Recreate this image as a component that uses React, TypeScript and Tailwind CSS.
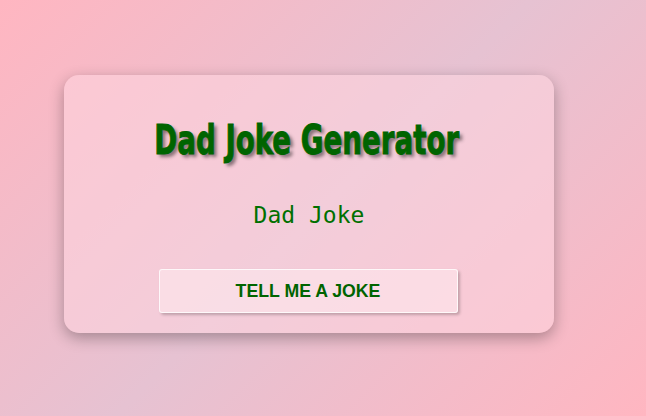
import React from "react";

export default function App() {
  return (
    <div className="w-[646px] h-[416px] overflow-hidden bg-[linear-gradient(135deg,#ffb6c1_0%,#e6c2d2_50%,#ffb6c1_100%)] pl-[64px] pt-[75px]">
      <div className="w-[490px] h-[258px] rounded-[15px] bg-[rgba(255,215,225,0.5)] shadow-[0_5px_15px_rgba(0,0,0,0.3)] flex flex-col items-center pt-[41px]">
        <h1 className="h-[46px] leading-[46px] text-[40px] font-bold text-[#006400] font-['DejaVu_Sans_Condensed','DejaVu_Sans',sans-serif] scale-x-[0.77] scale-y-[1.04] pr-[6px] [text-shadow:4px_3px_4px_rgba(0,0,0,0.45)] [-webkit-text-stroke:0.9px_#006400] whitespace-nowrap">
          Dad Joke Generator
        </h1>
        <p className="mt-[40px] h-[26px] leading-[26px] text-[23px] text-[#007000] font-['DejaVu_Sans_Mono','Liberation_Mono',monospace]">
          Dad Joke
        </p>
        <button className="mt-[41px] mr-[2px] w-[299px] h-[44px] rounded-[3px] border border-white/80 bg-[rgba(255,238,242,0.5)] shadow-[2px_2px_3px_rgba(0,0,0,0.22)] text-[17.7px] font-bold text-[#006400] uppercase font-['Liberation_Sans',Arial,sans-serif]">
          Tell me a joke
        </button>
      </div>
    </div>
  );
}
